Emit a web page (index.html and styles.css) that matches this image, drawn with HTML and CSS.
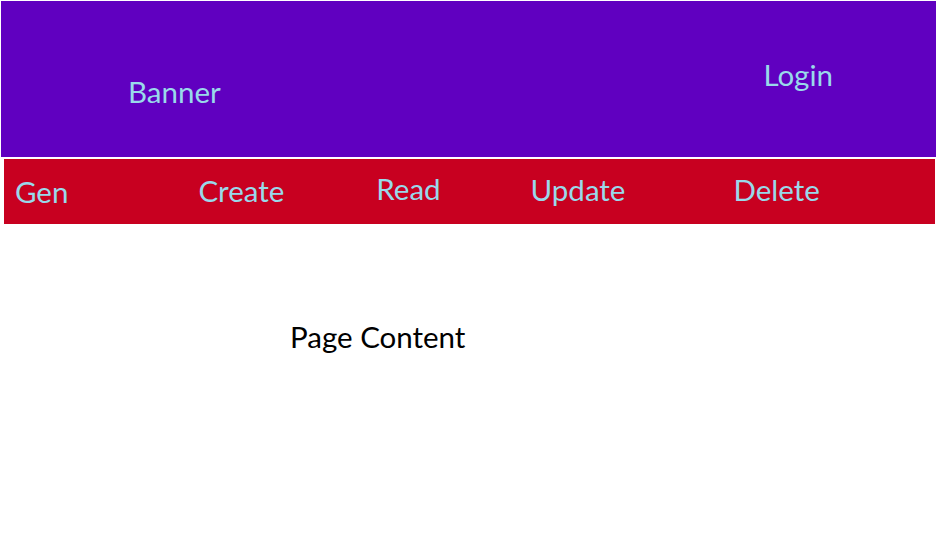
FILE: index.html
```html
<!DOCTYPE html>
<html>
<head>
<meta charset="utf-8">
<link rel="stylesheet" href="styles.css">
</head>
<body>
<header class="banner">
  <div class="banner-title">Banner</div>
  <div class="login">Login</div>
</header>
<nav class="nav">
  <span class="nav-item gen">Gen</span>
  <span class="nav-item create">Create</span>
  <span class="nav-item read">Read</span>
  <span class="nav-item update">Update</span>
  <span class="nav-item delete">Delete</span>
</nav>
<main class="content">
  <p class="content-text">Page Content</p>
</main>
</body>
</html>
```
FILE: styles.css
```css
html, body {
  margin: 0;
  padding: 0;
  background: #ffffff;
}
body {
  font-family: Lato, "Open Sans", sans-serif;
  width: 940px;
  height: 547px;
  overflow: hidden;
}
.banner {
  margin: 1px 4px 0 1px;
  height: 156px;
  background: #6000c0;
  color: #99d9ea;
  font-size: 29.5px;
  display: flex;
  align-items: flex-start;
}
.banner-title {
  margin-left: 127px;
  margin-top: 74px;
  line-height: 34px;
}
.login {
  margin-left: auto;
  margin-right: 103px;
  margin-top: 57px;
  line-height: 34px;
}
.nav {
  margin: 2px 5px 0 4px;
  height: 65px;
  background: #c80020;
  color: #99d9ea;
  font-size: 29.5px;
  display: flex;
  align-items: flex-start;
}
.nav-item {
  line-height: 34px;
  margin-top: 15px;
}
.gen { margin-left: 11px; margin-top: 16px; }
.create { margin-left: 130px; }
.read { margin-left: 92px; margin-top: 13px; }
.update { margin-left: 90px; margin-top: 14px; }
.delete { margin-left: 108px; margin-top: 14px; }
.content {
  padding: 96px 0 0 290px;
}
.content-text {
  margin: 0;
  color: #000000;
  font-size: 29.5px;
  line-height: 34px;
}
```
